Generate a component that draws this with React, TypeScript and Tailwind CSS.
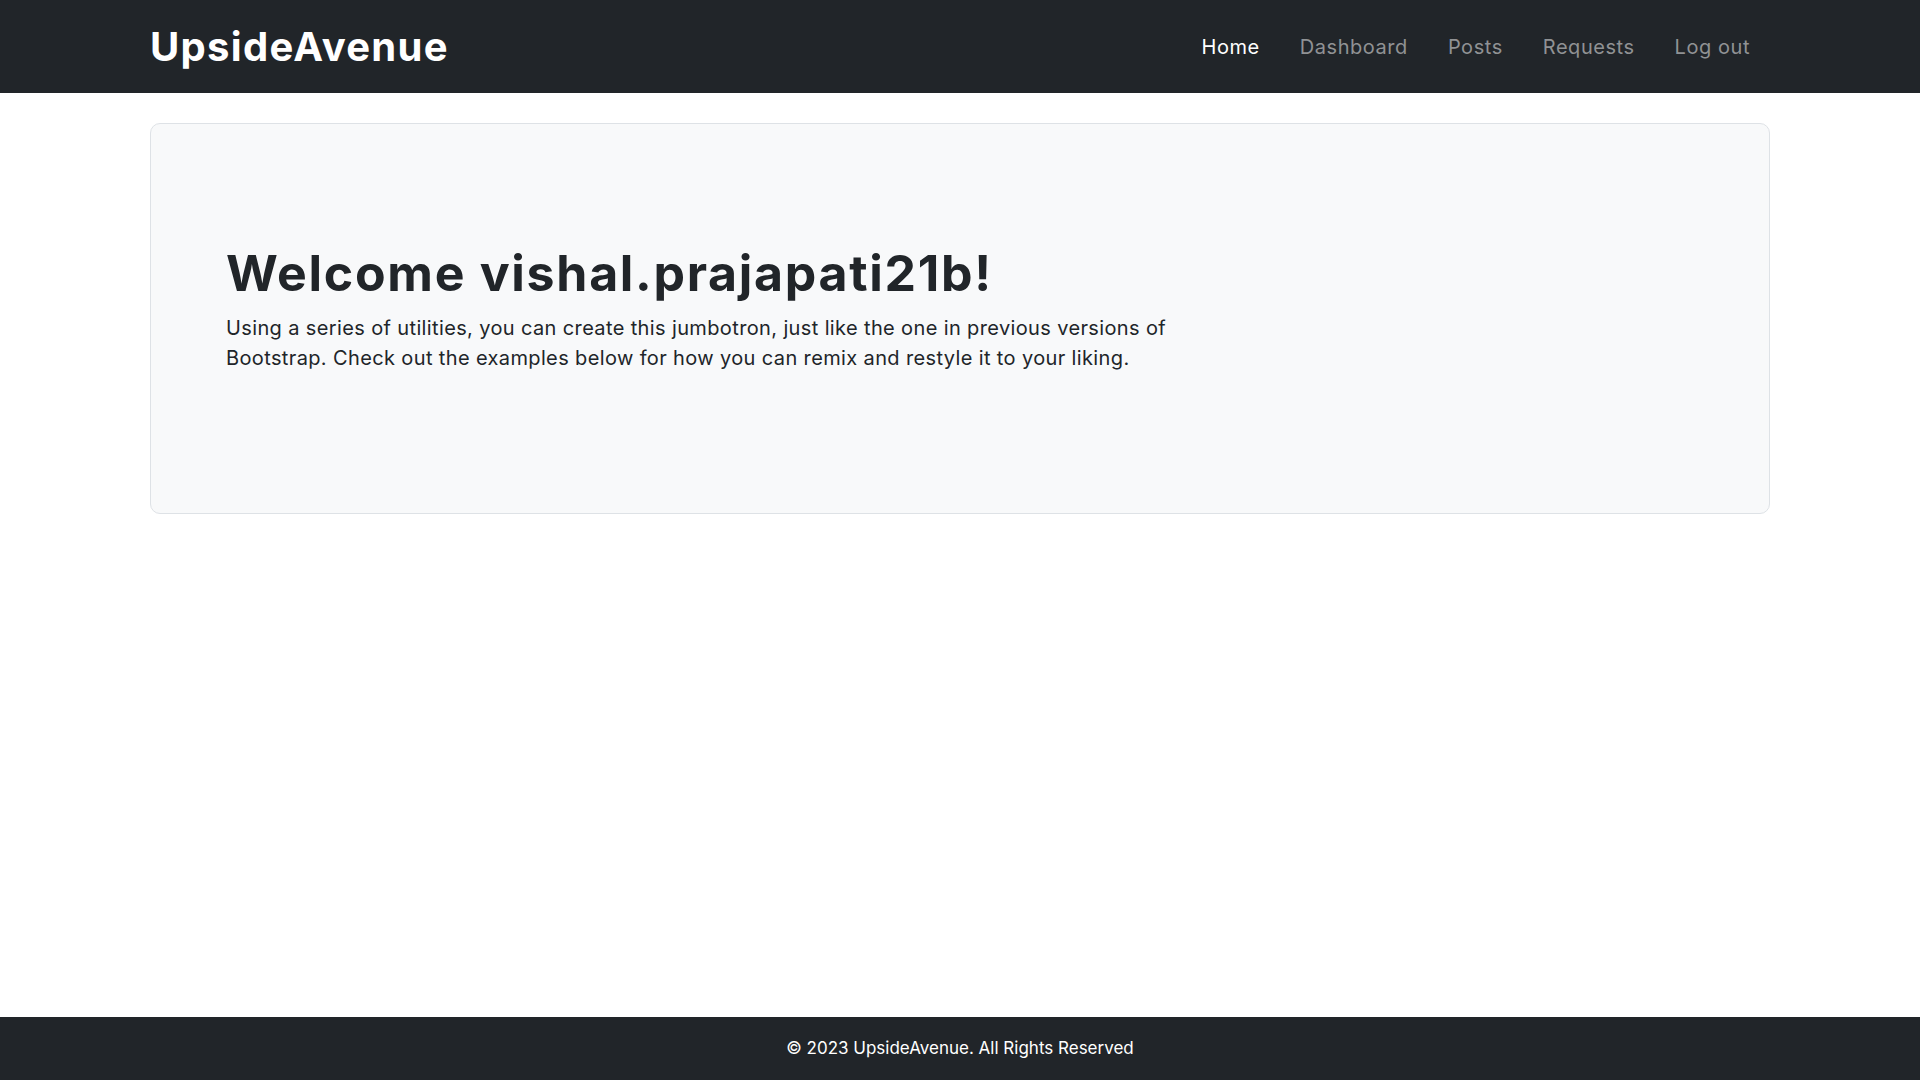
const links = [
  { label: "Home", active: true },
  { label: "Dashboard", active: false },
  { label: "Posts", active: false },
  { label: "Requests", active: false },
  { label: "Log out", active: false },
];

function Navbar() {
  return (
    <nav className="h-[93px] bg-[#212529]">
      <div className="mx-auto flex h-full max-w-[1650px] items-center justify-between px-[15px]">
        <a href="#" className="text-[40px] font-bold leading-none tracking-[1.3px] text-white">
          UpsideAvenue
        </a>
        <ul className="flex items-center">
          {links.map((link) => (
            <li key={link.label}>
              <a
                href="#"
                className={
                  "block px-[20px] py-[10px] text-[20px] leading-[30px] tracking-[0.55px] " +
                  (link.active ? "text-white" : "text-[#909294]")
                }
              >
                {link.label}
              </a>
            </li>
          ))}
        </ul>
      </div>
    </nav>
  );
}

function Jumbotron({ username }: { username: string }) {
  return (
    <div className="rounded-[10px] border border-[#dee2e6] bg-[#f8f9fa] px-[75px] pb-[140px] pt-[119px]">
      <h1 className="mb-[10px] text-[50px] font-bold leading-[60px] tracking-[1.7px] text-[#212529]">
        Welcome {username}!
      </h1>
      <p className="w-[982px] text-[20px] leading-[30px] tracking-[0.37px] text-[#212529]">
        Using a series of utilities, you can create this jumbotron, just like the one in previous versions of
        Bootstrap. Check out the examples below for how you can remix and restyle it to your liking.
      </p>
    </div>
  );
}

export default function App() {
  return (
    <div className="flex min-h-screen flex-col bg-white font-['Inter',sans-serif]">
      <Navbar />
      <main className="mx-auto mt-[30px] w-full max-w-[1650px] px-[15px]">
        <Jumbotron username="vishal.prajapati21b" />
      </main>
      <footer className="mt-auto flex h-[63px] items-center justify-center bg-[#212529]">
        <p className="text-[17px] text-white">© 2023 UpsideAvenue. All Rights Reserved</p>
      </footer>
    </div>
  );
}
